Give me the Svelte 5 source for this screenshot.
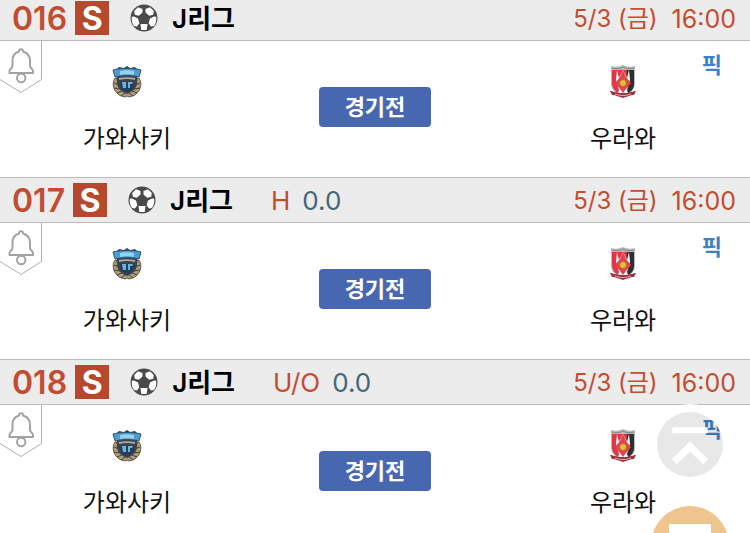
<script>
  const matches = [
    { no: '016', type: '', line: '' },
    { no: '017', type: 'H', line: '0.0' },
    { no: '018', type: 'U/O', line: '0.0' }
  ].map((m) => ({
    ...m,
    league: 'J리그',
    day: '5/3 (금)',
    time: '16:00',
    home: '가와사키',
    away: '우라와',
    status: '경기전'
  }))

  function toTop() {
    window.scrollTo({ top: 0, behavior: 'smooth' })
  }
</script>

<main class="list">
  {#each matches as m (m.no)}
    <section class="match">
      <header class="head">
        <span class="no">{m.no}</span>
        <span class="badge">S</span>
        <svg class="ball" viewBox="0 0 28 28" aria-hidden="true">
          <circle cx="14" cy="14" r="13.5" fill="#4a4a4a" />
          <g fill="#fff">
            <path d="M8 3.3 12.500 5v3.500L8.800 11.800 4.800 10.800 4.200 7Z" />
            <path d="M20 3.3 15.500 5v3.500l3.700 3.300 4-1 .6-3.800Z" />
            <path d="M1.800 12.800 4 12.600l4 2 1.400 4.600-2.400 3.200-3-.4A13 13 0 0 1 1.800 12.800Z" />
            <path d="M26.200 12.800 24 12.600l-4 2-1.400 4.600 2.400 3.200 3-.4a13 13 0 0 0 2.200-9.200Z" />
            <path d="M10.500 20h7l-.8 6h-5.400Z" />
          </g>
        </svg>
        <strong class="league">{m.league}</strong>
        {#if m.type}
          <span class="type">{m.type}</span>
          <span class="line">{m.line}</span>
        {/if}
        <time class="when">
          <span class="day">{m.day}</span>
          <span class="hour">{m.time}</span>
        </time>
      </header>

      <div class="body">
        <button class="alarm" aria-label="알림">
          <svg viewBox="0 0 43 53" fill="none">
            <path d="M41.5 0V38.500L21 51.500 0 38.500" stroke="#b0b0b0" />
            <g stroke="#a3a3a3" stroke-width="2">
              <path d="M19 10.500c0-3 4-3 4 0 5 1.500 7 5 7 9v5.500c0 2 3 3 3 5v2H9.500v-2c0-2 3-3 3-5v-5.500c0-4 1.500-7.500 6.500-9Z" stroke-linejoin="round" />
              <circle cx="21.200" cy="37" r="4.200" />
            </g>
          </svg>
        </button>

        <div class="team">
          <svg class="crest" viewBox="0 0 30 34" aria-hidden="true">
            <path d="M3 13C-1 19 2 27 8 30.500l5 1.500 2-1 2 1 5-1.500c6-3.500 9-11.500 5-17.500l-5 2H8Z" fill="#b09d7c" stroke="#655a48" />
            <path d="m2 18 5 2m-5 3 6 1m-3 4 5-2m-1 5 4-3m15-10-5 2m5 3-6 1m3 4-5-2m1 5-4-3" stroke="#453e35" />
            <path d="M4 5 7 2l5 1 3-2 3 2 5-1 3 3-1 14c-1 5-5 8-10 10-5-2-9-5-10-10Z" fill="#3d434b" />
            <path d="M8 17h14v3c0 3-3 6-7 7-4-1-7-4-7-7Z" fill="#243f5b" />
            <path d="M10 17h4v6h-3Zm6 0h5l-1 2h-2v4h-2Z" fill="#69b4df" />
            <path d="M1 5c6-2 22-2 28 0l-2 7c-7-2-17-2-24 0Z" fill="#4a9cd4" stroke="#35536b" />
            <path d="M8 6c4-1 10-1 14 0v4c-4-1-10-1-14 0Z" fill="#98d0f0" />
            <path d="M7 14c4-1 12-1 16 0" stroke="#aaa" stroke-width="2" fill="none" />
          </svg>
          <span class="name">{m.home}</span>
        </div>

        <button class="status">{m.status}</button>

        <div class="team">
          <svg class="crest" viewBox="0 0 30 34" aria-hidden="true">
            <path d="M3 1c4 1 7 1 12-1 5 2 8 2 12 1v17c0 7-5 11-12 14C8 29 3 25 3 18Z" fill="#b9b9b9" />
            <path d="M4 5h22v13c0 6-5 10-11 13C9 28 4 24 4 18Z" fill="#e23545" />
            <path d="M19 5h7v13c0 5-2 8-6 10l-2-5Z" fill="#302e32" />
            <path d="m9 5 2 8 4-8 4 8 2-8 1 10-3 10 1 3H10l1-3-3-10Z" fill="#fff" />
            <path d="m15 5 3 7 5 6-5 6-3 4-3-4-5-6 5-6Z" fill="#e04452" />
            <circle cx="15" cy="18" r="3.500" fill="#e6c034" stroke="#b5652a" />
            <path d="M2 26c3 0 5 2 13 2s10-2 13-2l-2 4c-4 0-7 2-11 3-4-1-7-3-11-3Z" fill="#9d3342" />
            <path d="M7 29c5 2 11 2 16 0" stroke="#d9a5a5" fill="none" />
            <path d="M4 3c4 1 8 1 11-1 3 2 7 2 11 1" stroke="#858585" fill="none" />
          </svg>
          <span class="name">{m.away}</span>
        </div>

        <a class="pick" href="#pick">픽</a>
      </div>
    </section>
  {/each}
</main>

<nav class="float">
  <button class="round top" aria-label="맨 위로" on:click={toTop}>
    <svg viewBox="0 0 65 65">
      <path d="M15 15h35v6H15Z" fill="#fff" />
      <path d="m17 49 15.500-15L48 49" fill="none" stroke="#fff" stroke-width="7" />
    </svg>
  </button>
  <button class="round chat" aria-label="채팅">
    <svg viewBox="0 0 78 78">
      <path d="M18 18h42v36H38L28 64V54H18Z" fill="#fff" />
    </svg>
  </button>
</nav>

<style>
  :global(body) {
    background: #fff;
    font-family: Inter, "Noto Sans CJK KR", sans-serif;
    overflow: hidden;
  }

  button {
    padding: 0;
    border: 0;
    background: none;
    font-family: inherit;
    cursor: pointer;
  }

  svg {
    display: block;
  }

  .list {
    margin-top: -5px;
  }

  .head {
    display: flex;
    align-items: center;
    box-sizing: border-box;
    height: 46px;
    padding: 0 14px 0 12px;
    background: #ececec;
    border-top: 1px solid #bbb;
    border-bottom: 1px solid #bbb;
    color: #c24d32;
    font-size: 26px;
    line-height: 32px;
    white-space: nowrap;
  }

  .no,
  .league,
  .type,
  .line,
  .when {
    padding-top: 2px;
  }

  .no {
    font-size: 32px;
    font-weight: 600;
  }

  .badge {
    width: 34px;
    height: 34px;
    margin-left: 8px;
    background: #b5482d;
    color: #fff;
    font-size: 32px;
    font-weight: 700;
    line-height: 36px;
    text-align: center;
  }

  .ball {
    width: 28px;
    height: 28px;
    margin-left: 21px;
  }

  .league {
    margin-left: 14px;
    color: #000;
    font-weight: 600;
  }

  .type {
    margin-left: 38px;
  }

  .line {
    margin-left: 12px;
    color: #43677a;
  }

  .when {
    display: flex;
    gap: 14px;
    margin-left: auto;
  }

  .day {
    font-size: 24px;
  }

  .hour {
    font-size: 25px;
  }

  .body {
    position: relative;
    display: grid;
    grid-template-columns: repeat(3, 1fr);
    justify-items: center;
    box-sizing: border-box;
    height: 136px;
    padding: 0 3px;
  }

  .alarm {
    position: absolute;
    top: 0;
    left: 0;
    width: 43px;
    height: 53px;
  }

  .team {
    display: flex;
    flex-direction: column;
    align-items: center;
    padding-top: 24px;
  }

  .crest {
    width: 30px;
    height: 34px;
  }

  .name {
    margin-top: 24px;
    color: #111;
    font-size: 24px;
    line-height: 32px;
  }

  .status {
    width: 112px;
    height: 40px;
    margin-top: 46px;
    border-radius: 4px;
    background: #4768b0;
    color: #fff;
    font-size: 22px;
    font-weight: 600;
    line-height: 40px;
  }

  .pick {
    position: absolute;
    top: 8px;
    right: 28px;
    color: #3c82c8;
    font-size: 22px;
    font-weight: 600;
    line-height: 32px;
    text-decoration: none;
  }

  .float {
    position: fixed;
    right: 21px;
    bottom: -51px;
    display: flex;
    flex-direction: column;
    align-items: center;
    gap: 29px;
  }

  .round {
    border-radius: 50%;
  }

  /* white halo hides the row behind the ring, the disc itself stays see-through */
  .top {
    width: 66px;
    height: 65px;
    background: rgba(0, 0, 0, 0.09);
    box-shadow: 0 0 0 8px #fff;
  }

  .chat {
    width: 78px;
    height: 78px;
    background: #eec58c;
  }
</style>
